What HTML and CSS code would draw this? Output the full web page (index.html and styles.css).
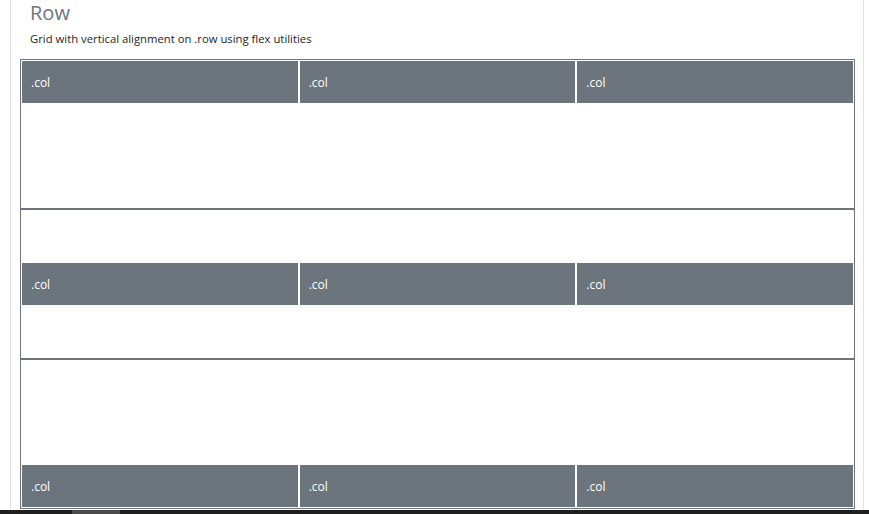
FILE: index.html
```html
<!DOCTYPE html>
<html>
<head>
<meta charset="utf-8">
<link rel="stylesheet" href="styles.css">
</head>
<body>
<div class="page">
  <div class="viewport">
    <div class="card">
      <div class="head">
        <h3 class="title">Row</h3>
        <p class="desc">Grid with vertical alignment on .row using flex utilities</p>
      </div>
      <div class="rows">
        <div class="row row-start">
          <div class="col">.col</div>
          <div class="col">.col</div>
          <div class="col">.col</div>
        </div>
        <div class="row row-center">
          <div class="col">.col</div>
          <div class="col">.col</div>
          <div class="col">.col</div>
        </div>
        <div class="row row-end">
          <div class="col">.col</div>
          <div class="col">.col</div>
          <div class="col">.col</div>
        </div>
      </div>
    </div>
  </div>
  <div class="hscroll"><div class="thumb"></div></div>
</div>
</body>
</html>
```

FILE: styles.css
```css
* { box-sizing: border-box; }
html, body { margin: 0; padding: 0; background: #fff; }
body { font-family: "Open Sans", "Noto Sans", "Liberation Sans", sans-serif; color: #212529; }
.page { height: 514px; display: flex; flex-direction: column; overflow: hidden; }
.viewport { flex: 1; min-height: 0; padding: 0 5px 0 10px; overflow: hidden; }
.card {
  height: 100%;
  border-left: 1px solid #e3e3e3;
  border-right: 1px solid #e3e3e3;
  padding: 0 8px 0 9px;
}
.head { padding: 0 10px; }
.title {
  margin: 0;
  padding-top: 1px;
  font-size: 20px;
  line-height: 24px;
  font-weight: 500;
  color: #6c757d;
}
.desc {
  margin: 7px 0 13px;
  font-size: 11.3px;
  line-height: 14px;
  color: #212529;
}
.rows { display: flex; flex-direction: column; }
.row {
  display: flex;
  height: 150px;
  border: 1px solid #6c757d;
}
.row-start { align-items: flex-start; }
.row-center { align-items: center; }
.row-end { align-items: flex-end; }
.col {
  flex: 1 1 0;
  background: #6c757d;
  border: 1px solid #fff;
  color: #fff;
  font-size: 12px;
  line-height: 18px;
  padding: 13px 9px 11px;
}
.hscroll {
  height: 4px;
  background: #1f1f1f;
  display: flex;
  padding-left: 72px;
}
.thumb { width: 48px; background: #4a4a4a; }
```
